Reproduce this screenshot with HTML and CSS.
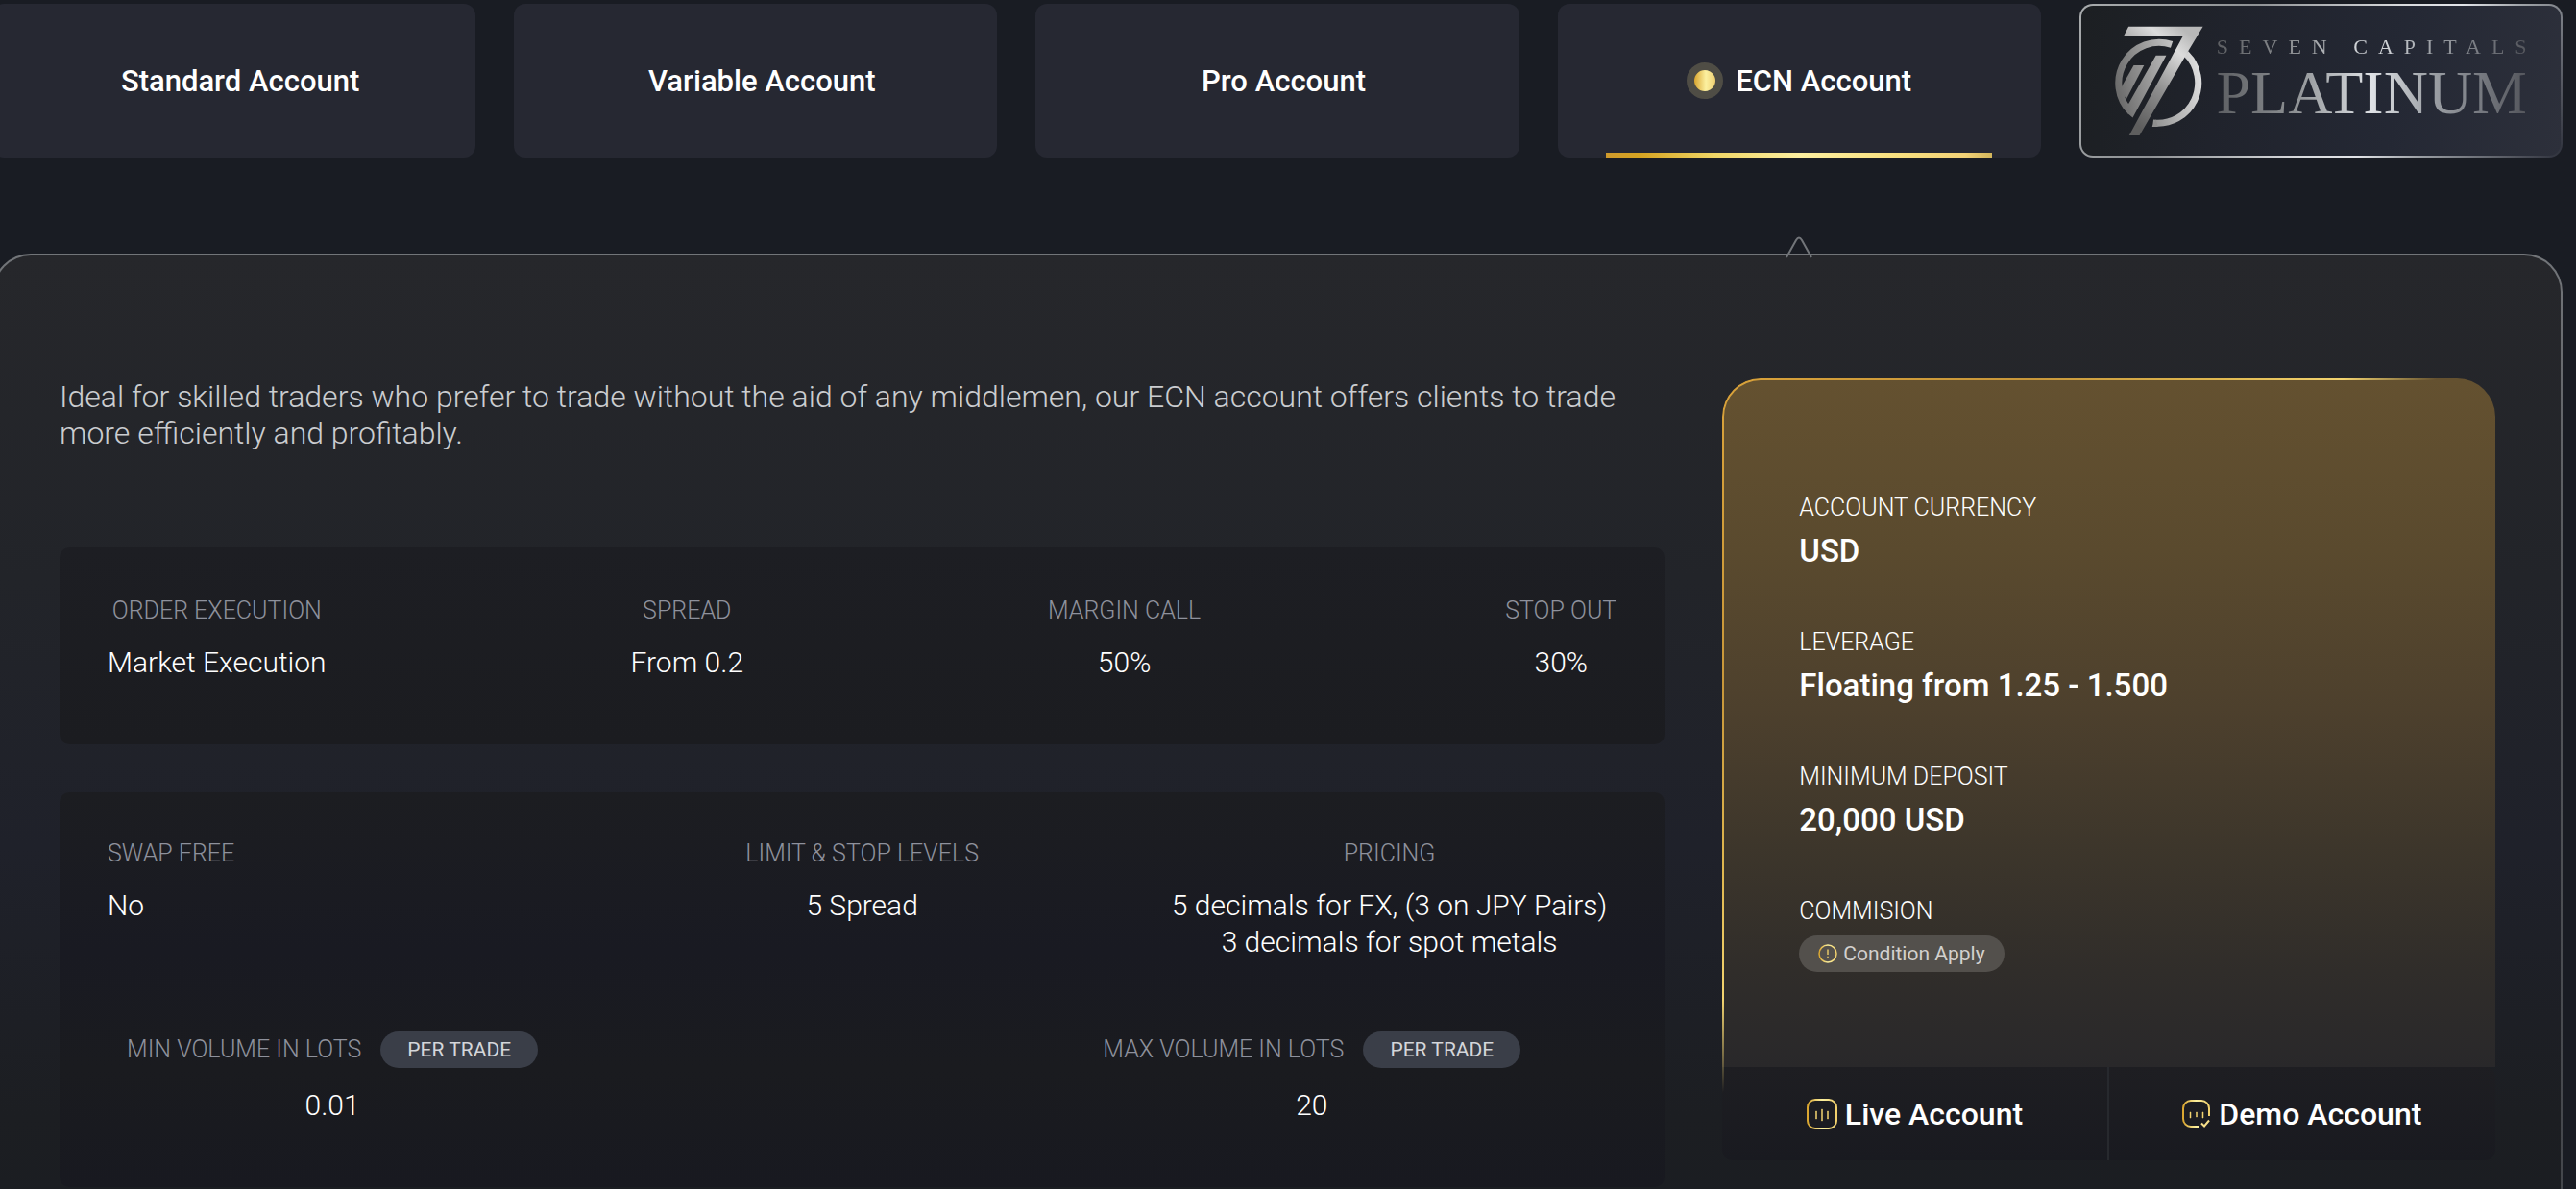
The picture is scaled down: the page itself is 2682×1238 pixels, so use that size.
FILE: index.html
```html
<!DOCTYPE html>
<html lang="en">
<head>
  <meta charset="UTF-8" />
  <title>Account Types</title>
  <link rel="stylesheet" href="styles.css">
</head>
<body>
  <div class="page">
    <!-- Account tabs -->
    <nav class="tabs">
      <button class="tab" type="button"><span class="tab-label">Standard Account</span></button>
      <button class="tab" type="button"><span class="tab-label">Variable Account</span></button>
      <button class="tab" type="button"><span class="tab-label">Pro Account</span></button>
      <button class="tab active" type="button">
        <span class="dot"></span>
        <span class="tab-label">ECN Account</span>
      </button>
      <button class="tab platinum" type="button">
        <svg class="logo-mark" viewBox="38 36 272 340" aria-hidden="true">
          <defs>
            <linearGradient id="silver" gradientUnits="userSpaceOnUse" x1="300" y1="90" x2="90" y2="330">
              <stop offset="0" stop-color="#b8b8b8" />
              <stop offset="0.2" stop-color="#dcdcdc" />
              <stop offset="0.6" stop-color="#8e8e8e" />
              <stop offset="1" stop-color="#5e5e5e" />
            </linearGradient>
            <linearGradient id="silver-ring" gradientUnits="userSpaceOnUse" x1="310" y1="200" x2="50" y2="260">
              <stop offset="0" stop-color="#e0e0e0" />
              <stop offset="0.5" stop-color="#a6a6a6" />
              <stop offset="1" stop-color="#6c6c6c" />
            </linearGradient>
          </defs>
          <path d="M213 94 A125.5 125.5 0 0 0 86 303" fill="none" stroke="url(#silver-ring)" stroke-width="21" />
          <path d="M257 122 A125.5 125.5 0 0 1 155 337" fill="none" stroke="url(#silver-ring)" stroke-width="21" />
          <path d="M152 349 L164 326 L170 349 Z" fill="#8f8f8f" />
          <path d="M95 158 H127 L73 262 L52 240 L60 220 Z" fill="url(#silver-ring)" />
          <path d="M164 128 H196 L92 321 L78 309 L66 286 L80 276 Z" fill="url(#silver-ring)" />
          <path d="M79 38 H310 L265 113 L113 376 H81 L248 67 H64 Z" fill="url(#silver)" />
        </svg>
        <span class="logo-text">
          <span class="logo-small">SEVEN CAPITALS</span>
          <span class="logo-big">PLATINUM</span>
        </span>
      </button>
    </nav>

    <!-- Selected account -->
    <main class="panel">
      <div class="pointer-row">
        <svg class="pointer" viewBox="0 0 28 24" aria-hidden="true">
          <path d="M1 22 L11 4 Q14 -1 17 4 L27 22" />
        </svg>
      </div>

      <section class="details">
        <p class="intro">Ideal for skilled traders who prefer to trade without the aid of any middlemen, our ECN account offers clients to trade more efficiently and profitably.</p>

        <div class="box">
          <div class="row spread">
            <div class="item"><span class="label">ORDER EXECUTION</span><span class="value">Market Execution</span></div>
            <div class="item"><span class="label">SPREAD</span><span class="value">From 0.2</span></div>
            <div class="item"><span class="label">MARGIN CALL</span><span class="value">50%</span></div>
            <div class="item"><span class="label">STOP OUT</span><span class="value">30%</span></div>
          </div>
        </div>

        <div class="box">
          <div class="row thirds">
            <div class="item left"><span class="label">SWAP FREE</span><span class="value">No</span></div>
            <div class="item"><span class="label">LIMIT &amp; STOP LEVELS</span><span class="value">5 Spread</span></div>
            <div class="item right"><span class="label">PRICING</span><span class="value">5 decimals for FX, (3 on JPY Pairs)<br>3 decimals for spot metals</span></div>
          </div>
          <div class="row volumes">
            <div class="item">
              <span class="label">MIN VOLUME IN LOTS <span class="pill">PER TRADE</span></span>
              <span class="value">0.01</span>
            </div>
            <div class="item">
              <span class="label">MAX VOLUME IN LOTS <span class="pill">PER TRADE</span></span>
              <span class="value">20</span>
            </div>
          </div>
        </div>
      </section>

      <aside class="gold-card">
        <svg class="defs" width="0" height="0" aria-hidden="true">
          <linearGradient id="gold" x1="0" y1="0" x2="1" y2="0">
            <stop offset="0" stop-color="#d9a52f" />
            <stop offset="0.5" stop-color="#fbf0a0" />
            <stop offset="1" stop-color="#f0cf6b" />
          </linearGradient>
        </svg>
        <div class="gold-body">
          <div class="fact"><span class="fact-label">ACCOUNT CURRENCY</span><span class="fact-value">USD</span></div>
          <div class="fact"><span class="fact-label">LEVERAGE</span><span class="fact-value">Floating from 1.25 - 1.500</span></div>
          <div class="fact"><span class="fact-label">MINIMUM DEPOSIT</span><span class="fact-value">20,000 USD</span></div>
          <div class="fact">
            <span class="fact-label">COMMISION</span>
            <button class="condition" type="button">
              <svg class="icon-info" viewBox="0 0 20 20" aria-hidden="true">
                <circle cx="10" cy="10" r="9" fill="none" stroke="url(#gold)" stroke-width="1.5" />
                <path d="M9.3 5.5h1.4v5.5h-1.4z M9.3 12.8h1.4v1.6h-1.4z" fill="#f0cf6b" />
              </svg>
              Condition Apply
            </button>
          </div>
        </div>
        <div class="actions">
          <a class="action" href="#live">
            <svg class="icon-live" viewBox="0 0 32 32" aria-hidden="true">
              <rect x="1" y="1" width="30" height="30" rx="8" fill="none" stroke="url(#gold)" stroke-width="2" />
              <path d="M9.5 13v8h1v-8z M15.5 11v12h1v-12z M21.5 13v8h1v-8z" fill="#f3d470" stroke="#f3d470" stroke-width="0.5" />
            </svg>
            Live Account
          </a>
          <a class="action" href="#demo">
            <svg class="icon-demo" viewBox="0 0 30 30" aria-hidden="true">
              <path d="M17 28H9A8 8 0 0 1 1 20V9A8 8 0 0 1 9 1H20A8 8 0 0 1 28 9V17" fill="none" stroke="url(#gold)" stroke-width="2" />
              <path d="M8 13v6h1v-6z M14.5 13v5h1v-5z M21 13v6h1v-6z" fill="#f3d470" stroke="#f3d470" stroke-width="0.5" />
              <path d="M20 24.5l3 3 5-6" fill="none" stroke="#f8e08a" stroke-width="2" />
            </svg>
            Demo Account
          </a>
        </div>
      </aside>
    </main>
  </div>
</body>
</html>
```

FILE: styles.css
```css
* {
  box-sizing: border-box;
}

body {
  margin: 0;
  background: #191c23;
  color: #fff;
  font-family: Roboto, "Liberation Sans", sans-serif;
}

button {
  font-family: inherit;
  color: inherit;
  border: 0;
}

.page {
  height: 100vh;
  padding: 4px 14px 0 0;
  overflow: hidden;
}

/* Tabs */
.tabs {
  display: grid;
  grid-template-columns: repeat(5, 1fr);
  gap: 40px;
  margin-left: -8px;
}

.tab {
  position: relative;
  display: flex;
  align-items: center;
  justify-content: center;
  height: 160px;
  padding: 0;
  background: #262832;
  border-radius: 12px;
  font-size: 31px;
  font-weight: 500;
  cursor: pointer;
}

.tab-label {
  padding-left: 13px;
}

.tab.active::after {
  content: "";
  position: absolute;
  left: 10%;
  right: 10%;
  bottom: -1px;
  height: 6px;
  background: linear-gradient(90deg, #cf9a2c, #d6a422 9%, #f0d666 28%, #fcefa0 50%, #f8e080 75%, #f2d277 93%, #d2b65c);
}

.dot {
  width: 38px;
  height: 38px;
  border: 8px solid #4f4d45;
  border-radius: 50%;
  background: linear-gradient(90deg, #d9a52f, #fcf0a0 55%, #efcf70);
}

.tab.platinum {
  justify-content: space-between;
  padding: 0 35px;
  border: 2px solid transparent;
  border-radius: 14px;
  background:
    linear-gradient(100deg, #1c1f22, #20232c 30%, #242834 65%, #2d303b) padding-box,
    linear-gradient(125deg, #a8abad, #8f9295 30%, #d8dadd 55%, #e2e4e8 65%, #9fa3a8 75%, #2d303b) border-box;
}

.logo-mark {
  width: 92px;
  height: 114px;
  flex: none;
}

.logo-text {
  display: flex;
  flex-direction: column;
  font-family: "Liberation Serif", serif;
  font-weight: 400;
  color: transparent;
  background: linear-gradient(90deg, #5c5e62, #8d9093 25%, #dfe2e6 50%, #a0a4a9 68%, #777a81 85%, #54565c);
  background-clip: text;
  -webkit-background-clip: text;
}

.logo-small {
  margin-right: -11px;
  font-size: 22px;
  line-height: 26px;
  letter-spacing: 11px;
}

.logo-big {
  font-size: 64px;
  line-height: 70px;
}

/* Panel */
.panel {
  position: relative;
  display: grid;
  grid-template-columns: 27fr 13fr;
  gap: 60px;
  align-items: start;
  margin: 100px 0 0 -8px;
  padding: 128px 68px 100px;
  border: 2px solid transparent;
  border-radius: 40px;
  background:
    linear-gradient(#26272b, #222429 30%, #1f212a 55%, #1c1e22 80%, #191c22) padding-box,
    linear-gradient(#727579, #55585c 30%, #3f4247) border-box;
}

/* sits over the panel edge, under the fourth tab */
.pointer-row {
  position: absolute;
  top: -20px;
  left: -2px;
  right: -2px;
  display: grid;
  grid-template-columns: repeat(5, 1fr);
  gap: 40px;
}

.pointer {
  grid-column: 4;
  justify-self: center;
  width: 28px;
  height: 24px;
  fill: none;
  stroke: #727579;
  stroke-width: 2;
}

.intro {
  margin: 0 0 100px;
  font-size: 32px;
  line-height: 38px;
  font-weight: 300;
  color: #cbcdd0;
}

.box {
  margin-bottom: 50px;
  padding: 51px 50px 66px;
  border-radius: 10px;
  background: linear-gradient(#1d1e23, #1b1c20);
}

.box + .box {
  padding-top: 49px;
  background: linear-gradient(#1c1d21, #191a22 40%, #1a1b1f 70%, #181920);
}

.row.spread {
  display: flex;
  justify-content: space-between;
}

.row.thirds {
  display: grid;
  grid-template-columns: repeat(3, 1fr);
}

.row.volumes {
  display: grid;
  grid-template-columns: 19fr 10fr;
  justify-items: start;
  margin-top: 74px;
  padding-left: 20px;
}

.item {
  display: flex;
  flex-direction: column;
  align-items: center;
  gap: 20px;
  text-align: center;
}

.item.left {
  align-items: flex-start;
}

.item.right {
  justify-self: end;
  padding: 0 10px;
}

.label {
  display: flex;
  align-items: center;
  gap: 20px;
  font-size: 25px;
  line-height: 30px;
  font-weight: 300;
  color: #8e919c;
}

.value {
  font-size: 30px;
  line-height: 38px;
  font-weight: 300;
}

.pill {
  padding: 0 28px;
  border-radius: 19px;
  background: #3a3e48;
  color: #d4d6da;
  font-size: 21px;
  line-height: 38px;
  font-weight: 400;
}

/* Gold card */
.gold-card {
  position: relative;
  border-radius: 40px 40px 10px 10px;
}

.gold-card::before {
  content: "";
  position: absolute;
  inset: 0;
  padding: 2px;
  border-radius: 40px 40px 0 0;
  background: linear-gradient(135deg, #d9a23a, #c8973a 20%, #e0b850 32%, #f3d470 40%, transparent 46%);
  mask: linear-gradient(#000 0 0) content-box exclude, linear-gradient(#000 0 0);
  pointer-events: none;
}

.defs {
  position: absolute;
}

.gold-body {
  display: flex;
  flex-direction: column;
  gap: 60px;
  padding: 120px 80px 99px;
  border-radius: 40px 40px 0 0;
  background: linear-gradient(#645130, #5a4a2e 25%, #4d402d 48%, #3d362b 68%, #302d2a 86%, #29282a);
}

.fact {
  display: flex;
  flex-direction: column;
  align-items: flex-start;
  gap: 10px;
}

.fact-label {
  font-size: 25px;
  line-height: 30px;
  font-weight: 300;
}

.fact-value {
  font-size: 33px;
  line-height: 40px;
  font-weight: 500;
}

.condition {
  display: flex;
  align-items: center;
  gap: 6px;
  height: 38px;
  padding: 0 20px;
  border-radius: 19px;
  background: #53504c;
  color: #d2d0ce;
  font-size: 21px;
  cursor: pointer;
}

.icon-info {
  width: 20px;
  height: 20px;
}

.actions {
  display: grid;
  grid-template-columns: 1fr 1fr;
  height: 97px;
  border-radius: 10px;
  background: linear-gradient(#1e1e22, #191a20);
}

.action {
  display: flex;
  align-items: center;
  justify-content: center;
  gap: 8px;
  color: #fff;
  font-size: 32px;
  line-height: 38px;
  font-weight: 500;
  text-decoration: none;
}

.action:first-child {
  border-right: 2px solid #27292e;
}

.icon-live {
  width: 32px;
  height: 32px;
}

.icon-demo {
  width: 30px;
  height: 30px;
}
```
